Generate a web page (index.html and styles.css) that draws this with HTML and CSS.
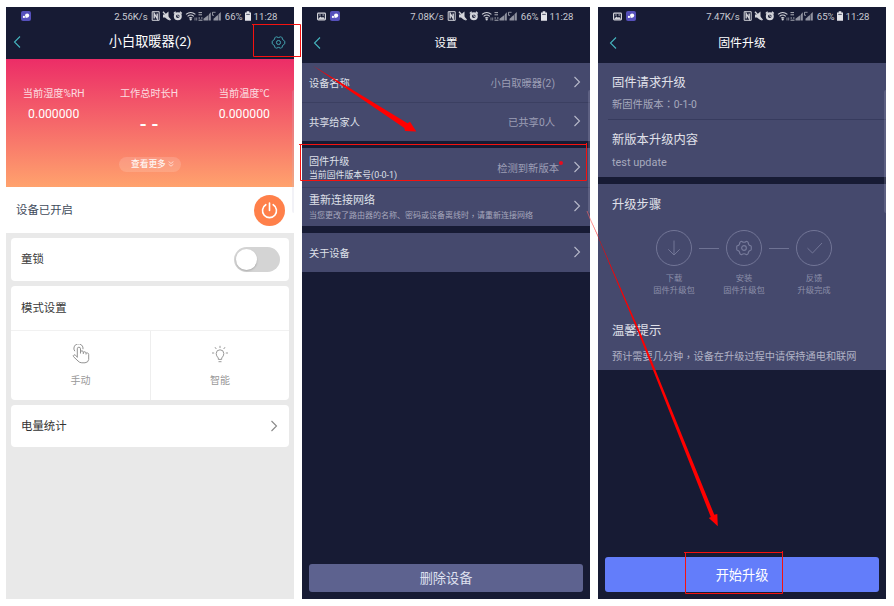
FILE: index.html
```html
<!DOCTYPE html>
<html lang="zh-CN">
<head>
<meta charset="utf-8">
<title>固件升级</title>
<link rel="stylesheet" href="styles.css">
</head>
<body>
<svg class="defs" width="0" height="0">
  <symbol id="back" viewBox="0 0 8 14"><path d="M7 1.5 1.5 7 7 12.5" fill="none" stroke="#45b5bf" stroke-width="1.1"/></symbol>
  <symbol id="chev" viewBox="0 0 8 12"><path d="M1.5 1 6.5 6 1.5 11" fill="none" stroke="currentColor" stroke-width="1.1"/></symbol>
  <symbol id="gear" viewBox="0 0 18 16"><path d="M5.4 1.2Q6 .7 6.7 1.1Q9 2.8 11.3 1.1Q12 .7 12.6 1.2L13.4 2.1Q13.5 5 16 5.7Q16.7 6 16.7 6.8V9.2Q16.7 10 16 10.3Q13.5 11 13.4 13.9L12.6 14.8Q12 15.3 11.3 14.9Q9 13.2 6.7 14.9Q6 15.3 5.4 14.8L4.6 13.9Q4.5 11 2 10.3Q1.3 10 1.3 9.2V6.8Q1.3 6 2 5.7Q4.5 5 4.6 2.1Z" fill="none" stroke="currentColor" stroke-width="1.2"/><circle cx="9" cy="8" r="2.5" fill="none" stroke="currentColor" stroke-width="1.2"/></symbol>
  <symbol id="photo" viewBox="0 0 9 9"><rect x=".6" y="1.1" width="7.8" height="6.8" rx=".8" fill="none" stroke="#d3d4da" stroke-width="1.2"/><path d="M1.5 6.5 3.5 4.6 5 5.7 6 4.8 7.6 6.5V7.2H1.5Z" fill="#d3d4da"/><path d="M2.2 3h1.6M5.4 3h1.6" stroke="#d3d4da"/></symbol>
  <symbol id="app" viewBox="0 0 10 10"><rect width="10" height="10" rx="2" fill="#5650bb"/><circle cx="6.1" cy="4.6" r="2.1" fill="#fff"/><circle cx="2.9" cy="5.9" r="1.1" fill="#fff"/><path d="M3 6.9 6 5.9V6.7Z" fill="#fff"/></symbol>
  <symbol id="status" viewBox="0 0 71 12">
    <g fill="none" stroke="#d3d4da">
      <path d="M8.2 1.7H1.2V10.3H8.2Z" stroke-width="1"/><path d="M3.2 8.5V3.5L6.2 8.5V3.5" stroke-width="1.4"/>
      <path d="M12 1.8 19.5 10" stroke-width="1.3"/>
      <circle cx="26.8" cy="6.2" r="2.9" stroke-width="2.2"/><path d="M26.8 4.2V6.4H28.3" stroke-width=".8"/><path d="M22.8 3.5 24.7 1.8M30.8 3.5 28.9 1.8" stroke-width="1.4"/>
      <path d="M35 4.4Q39.7.6 44.4 4.4M36.6 6.3Q39.7 3.7 42.8 6.3M38.1 8.1Q39.7 6.9 41.3 8.1" stroke-width="1.1"/>
      <path d="M44 7.5V10.5M45.7 7.5V10.5" stroke-width=".8" opacity=".7"/>
      <path d="M47.5 2.6H51M47.5 4.8H51M47.5 8H49M50 8H51.5M47.5 10.2H51.5" stroke-width="1" opacity=".8"/>
      <path d="M61.5 2.3H64.6M61.5 2.3V5.3M61.5 5.3H63" stroke-width=".9" opacity=".7"/>
    </g>
    <g fill="#d3d4da"><path d="M12 4.5H14L17.5 1.5V7.8L19 10.5 16.5 9.5 14 7.5H12Z"/><circle cx="39.7" cy="9.4" r="1.1"/><path d="M52.5 10.5V8.8L54.8 7V10.5ZM54.8 10.5V6.9L57.4 4.9V10.5ZM57.9 10.5V4.3L59.8 2.3V10.5ZM62.5 10.5V8.8L64.6 7V10.5ZM64.6 10.5V6.7L67 5V10.5ZM67.5 10.5V4.3L69.8 2V10.5Z" opacity=".65"/></g>
  </symbol>
  <symbol id="battery" viewBox="0 0 6 10"><path d="M0 1.5H1.7V.3H4.3V1.5H6V9.7H0Z" fill="#e4e4e9"/><path d="M1.2 3.4H4.8" stroke="#171b34" stroke-width=".7"/></symbol>
</svg>

<main class="board">
  <section class="phone">
    <header class="head head-home">
      <div class="status">
        <svg class="app"><use href="#app"/></svg>
        <span class="speed">2.56K/s</span><svg class="icons"><use href="#status"/></svg><span class="pct">66%</span><svg class="batt"><use href="#battery"/></svg><span class="time">11:28</span>
      </div>
      <div class="bar"><svg class="back"><use href="#back"/></svg><h1 class="title-home">小白取暖器(2)</h1><svg class="gear"><use href="#gear"/></svg></div>
    </header>
    <div class="hero">
      <div class="metrics">
        <div class="metric"><span>当前湿度%RH</span><b>0.000000</b></div>
        <div class="metric"><span>工作总时长H</span><b class="dash">- -</b></div>
        <div class="metric"><span>当前温度℃</span><b>0.000000</b></div>
      </div>
      <div class="more"><span>查看更多</span><svg width="6" height="6" viewBox="0 0 6 6"><path d="M.6.5 3 2.5 5.4.5M.6 3.2 3 5.2 5.4 3.2" fill="none" stroke="#fff" stroke-width=".6"/></svg></div>
    </div>
    <div class="power-row"><span>设备已开启</span>
      <svg width="31" height="31" viewBox="0 0 31 31"><circle cx="15.5" cy="15.5" r="15.5" fill="#ff804a"/><path d="M11.8 9.7A7 7 0 1 0 19.2 9.7M15.5 8V15.5" fill="none" stroke="#fff" stroke-width="1.6" stroke-linecap="round"/></svg>
    </div>
    <div class="cards">
      <div class="card lock"><span>童锁</span><i class="toggle"></i></div>
      <div class="card">
        <div class="mode-title">模式设置</div>
        <div class="modes">
          <div class="mode"><svg width="18" height="20" viewBox="0 0 18 20"><path d="M2.8 7.2A4.6 4.6 0 1 1 11 5.2M5.3 13.5V4.8A1.6 1.6 0 0 1 8.5 4.8V9.5M8.5 8.2Q8.6 6.7 9.9 6.8Q11.3 6.9 11.3 8.2V10M11.3 8.7Q11.6 7.5 12.9 7.8Q14 8.1 14 9.2V10.5M14 9.5Q14.5 8.6 15.6 9Q16.7 9.3 16.7 10.5V15.5Q16.3 18.5 13 18.8H9.8Q7.6 18.8 6 17L1.5 12.7Q.8 11.4 2 10.8Q3 10.5 5.3 13" fill="none" stroke="#939393" stroke-width="1"/></svg><span>手动</span></div>
          <div class="mode"><svg width="18" height="20" viewBox="0 0 18 20"><path d="M7.3 15.4V14Q5.2 12 5.2 9.6A3.8 3.8 0 0 1 12.8 9.6Q12.8 12 10.7 14V15.4ZM7.5 17.7H10.5M9 1.8V4M4 3.2 5.3 5M14 3.2 12.7 5M1 9H3.2M14.8 9H17" fill="none" stroke="#999" stroke-width="1"/></svg><span>智能</span></div>
        </div>
      </div>
      <div class="card stats"><span>电量统计</span><svg class="chev"><use href="#chev"/></svg></div>
    </div>
    <i class="edge"></i>
  </section>

  <section class="phone dark">
    <header class="head">
      <div class="status">
        <svg class="photo"><use href="#photo"/></svg><svg class="app"><use href="#app"/></svg>
        <span class="speed">7.08K/s</span><svg class="icons"><use href="#status"/></svg><span class="pct">66%</span><svg class="batt"><use href="#battery"/></svg><span class="time">11:28</span>
      </div>
      <div class="bar"><svg class="back inset"><use href="#back"/></svg><h1>设置</h1></div>
    </header>
    <div class="group">
      <div class="row"><span class="label">设备名称</span><span class="value">小白取暖器(2)</span><svg class="chev"><use href="#chev"/></svg></div>
      <div class="row"><span class="label">共享给家人</span><span class="value">已共享0人</span><svg class="chev"><use href="#chev"/></svg></div>
    </div>
    <div class="group">
      <div class="row"><div class="label firmware">固件升级<small>当前固件版本号(0-0-1)</small></div><span class="value alert">检测到新版本</span><svg class="chev"><use href="#chev"/></svg></div>
      <div class="row"><div class="label network">重新连接网络<small>当您更改了路由器的名称、密码或设备离线时<span class="mid low" lang="zh-TW">，</span>请重新连接网络</small></div><svg class="chev"><use href="#chev"/></svg></div>
    </div>
    <div class="group"><div class="row"><span class="label">关于设备</span><svg class="chev"><use href="#chev"/></svg></div></div>
    <button class="btn delete">删除设备</button>
    <i class="edge"></i>
  </section>

  <section class="phone dark">
    <header class="head">
      <div class="status">
        <svg class="photo"><use href="#photo"/></svg><svg class="app"><use href="#app"/></svg>
        <span class="speed">7.47K/s</span><svg class="icons"><use href="#status"/></svg><span class="pct">65%</span><svg class="batt"><use href="#battery"/></svg><span class="time">11:28</span>
      </div>
      <div class="bar"><svg class="back inset"><use href="#back"/></svg><h1 class="title-up">固件升级</h1></div>
    </header>
    <div class="group info">
      <div class="item"><h2>固件请求升级</h2><p>新固件版本<span class="mid" lang="zh-TW">：</span>0-1-0</p></div>
      <div class="item"><h2>新版本升级内容</h2><p class="latin">test update</p></div>
    </div>
    <div class="group guide">
      <h2>升级步骤</h2>
      <div class="steps">
        <div class="step"><svg width="36" height="36" viewBox="0 0 36 36"><circle cx="18" cy="18" r="17.5"/><path d="M18 10.5V25M12.3 19.3 18 25 23.7 19.3"/></svg><span>下载<br>固件升级包</span></div>
        <i class="link"></i>
        <div class="step"><svg width="36" height="36" viewBox="0 0 36 36"><circle cx="18" cy="18" r="17.5"/><use href="#gear" x="9.5" y="10" width="17" height="16"/></svg><span>安装<br>固件升级包</span></div>
        <i class="link"></i>
        <div class="step"><svg width="36" height="36" viewBox="0 0 36 36"><circle cx="18" cy="18" r="17.5"/><path d="M11.5 18.2 16.5 23 26 13"/></svg><span>反馈<br>升级完成</span></div>
      </div>
      <h2>温馨提示</h2>
      <p class="tip">预计需要几分钟<span class="mid low" lang="zh-TW">，</span>设备在升级过程中请保持通电和联网</p>
    </div>
    <button class="btn start">开始升级</button>
    <i class="edge"></i>
  </section>
</main>

<svg class="marks" width="894" height="606" viewBox="0 0 894 606">
  <g fill="none" stroke="#f5120f" stroke-width="1">
    <path d="M252 24.5H300.5V57M253.5 24.5V56.5H300.5"/>
    <path d="M299 144.5H587M300.5 144.5V180.5H586.5V143"/>
    <path d="M684 552.5H783M685.5 552.5V593.5H782.5V551"/>
  </g>
  <g fill="#f00">
    <path d="M313 65.8 407.5 123.3 410 121.7 416.3 131.5 405 130.9 404.3 128Z"/>
    <path d="M590 218 640 332 714.3 514.8 717.3 514 717.8 526.3 708.8 518 710.8 517 638.5 333Z"/>
  </g>
  <path d="M587 211 591 221 598 236" fill="none" stroke="#f66" stroke-width=".6"/>
</svg>
</body>
</html>
```
FILE: styles.css
```css
* { box-sizing: border-box; }
body {
  margin: 0;
  width: 894px;
  height: 606px;
  overflow: hidden;
  position: relative;
  background: #fff;
  font-family: Roboto, "Noto Sans CJK SC", sans-serif;
}
h1, h2, p { margin: 0; font-weight: 400; }
svg { display: block; flex: none; }
.defs { position: absolute; }
.board { display: flex; gap: 8px; padding: 7px 6px; }
.phone {
  position: relative;
  width: 288px;
  height: 592px;
  display: flex;
  flex-direction: column;
  background: #e9e9e9;
}
.dark { background: #171b34; }
.edge {
  position: absolute;
  right: 0;
  top: 83px;
  width: 2px;
  height: 123px;
  border-radius: 2px 0 0 2px;
  background: rgba(190, 190, 215, .2);
}

/* Header */
.head { height: 56px; flex: none; background: #171b34; color: #fff; }
.head-home { height: 52px; }
.status {
  display: flex;
  align-items: center;
  height: 18px;
  padding: 0 16.5px 0 15px;
  font-size: 9.6px;
  color: #c9cad2;
  white-space: nowrap;
}
.photo { width: 9px; height: 9px; margin-right: 4px; }
.app { width: 10px; height: 10px; }
.speed { margin-left: auto; }
.icons { width: 71px; height: 12px; margin: 0 3px 0 3px; }
.batt { width: 6px; height: 10px; margin: 0 2.5px; }
.bar {
  display: grid;
  grid-template-columns: 40px 1fr 40px;
  align-items: center;
  height: 36px;
}
.head-home .bar { height: 34.5px; }
.back { width: 8px; height: 14px; margin-left: 7px; }
.inset { margin-left: 11px; }
.bar h1 { font-size: 11.5px; line-height: 18px; text-align: center; }
.bar .title-home { font-size: 13.2px; }
.bar .title-up { font-size: 11.9px; }
.gear { width: 15px; height: 13px; margin-left: 16.5px; color: #45a9b5; }

/* Heater home */
.hero {
  height: 128px;
  flex: none;
  padding-top: 26.5px;
  color: #fff;
  background: linear-gradient(#ec2d67, #ffa26d);
}
.metrics {
  display: grid;
  grid-template-columns: repeat(3, 95.3px);
  justify-content: center;
  height: 71px;
  padding-right: 2px;
  text-align: center;
}
.metric { display: flex; flex-direction: column; font-size: 10.2px; line-height: 16px; }
.metric span { opacity: .8; white-space: nowrap; }
.metric b { margin-top: 4px; font-weight: 400; font-size: 12.2px; line-height: 16px; }
.metric .dash { font-size: 20px; margin-top: 14px; font-weight: 500; }
.more {
  display: flex;
  align-items: center;
  gap: 2px;
  width: 62px;
  height: 15px;
  margin: 0 auto;
  padding-left: 12px;
  border-radius: 8px;
  background: rgba(255, 255, 255, .15);
  font-size: 8.7px;
  line-height: 14px;
}
.more span { font-weight: 500; margin-top: -1px; opacity: .9; }
.power-row {
  display: flex;
  align-items: center;
  justify-content: space-between;
  height: 46px;
  flex: none;
  padding: 0 9px 0 10px;
  background: #fff;
  color: #414b5b;
  font-size: 11.4px;
}
.power-row span, .lock span, .stats span { margin-top: -1.5px; }
.cards {
  display: flex;
  flex-direction: column;
  gap: 5px;
  padding: 4.5px 5px;
  color: #3a3a3a;
  font-size: 11.4px;
}
.card { background: #fff; border-radius: 4px; }
.lock, .stats { display: flex; align-items: center; justify-content: space-between; padding: 0 9px 0 10px; }
.lock { height: 43px; }
.stats { height: 41.5px; padding-right: 11px; color: #333; }
.stats .chev { color: #888; }
.toggle {
  width: 46px;
  height: 25px;
  padding: 2px;
  border-radius: 13px;
  background: #d4d4d4;
}
.toggle::before {
  content: "";
  display: block;
  width: 21px;
  height: 21px;
  border-radius: 50%;
  background: #fff;
  box-shadow: 0 1px 2px rgba(0, 0, 0, .2);
}
.mode-title { height: 45.5px; padding-left: 10px; line-height: 45px; border-bottom: 1.5px solid #f1f1f1; }
.modes { display: grid; grid-template-columns: 1fr 1fr; height: 69px; }
.mode {
  display: flex;
  flex-direction: column;
  align-items: center;
  gap: 10px;
  padding-top: 13px;
  font-size: 10px;
  line-height: 14px;
  color: #999;
}
.mode + .mode { border-left: 1px solid #eee; }
.chev { width: 8px; height: 12px; }

/* Settings */
.group { background: #45496d; margin-bottom: 7px; flex: none; color: #dfe0e9; }
.row {
  display: flex;
  align-items: center;
  height: 39px;
  padding: 0 9px 1px 7px;
  font-size: 10.2px;
  white-space: nowrap;
}
.row + .row { border-top: 1px solid #3b3f61; padding-bottom: 2px; }
.label { margin-right: auto; }
.label small { display: block; }
.firmware { font-size: 10.1px; line-height: 14px; padding-top: 2px; }
.firmware small { font-size: 8.9px; line-height: 12px; }
.network { font-size: 11px; line-height: 16px; padding-top: 4px; }
.network small { font-size: 8px; line-height: 14px; color: #a5a7bc; }
.value { margin-right: 18px; color: #9c9eb5; font-size: 10.3px; }
.alert { position: relative; margin-right: 14px; margin-top: 1px; }
.alert::after {
  content: "";
  position: absolute;
  right: -3.5px;
  top: 1px;
  width: 4px;
  height: 4px;
  border-radius: 50%;
  background: #e80c1e;
}
.row .chev { color: #b8bacb; }
.mid { font-family: "Noto Sans CJK TC", sans-serif; line-height: 0; }
.low { vertical-align: -1px; }
.btn {
  margin: auto 7px 7px;
  height: 28px;
  padding: 1px 0 0;
  border: 0;
  border-radius: 3px;
  font: 13.2px/27px Roboto, "Noto Sans CJK SC", sans-serif;
}
.delete { background: #5d628f; color: #dfe1f0; }
.start { height: 35px; background: #637dfa; color: #fff; }

/* Firmware upgrade */
h2 { font-size: 12.3px; line-height: 18px; color: #e0e1ea; }
.item { height: 56px; padding: 11px 0 0 14px; }
.item + .item { height: 57.5px; margin-left: 10px; padding-left: 4px; border-top: 1px solid #373b5e; }
.item p { margin-top: 5px; font-size: 10.3px; line-height: 16px; color: #a7a9bd; }
.item .latin { font-size: 10.9px; margin-top: 6px; }
.guide { height: 186.5px; padding: 12.5px 0 0 14px; }
.steps { display: flex; justify-content: center; height: 108px; padding: 16px 10px 0 0; }
.step { width: 36px; display: flex; flex-direction: column; align-items: center; color: #777b9b; }
.step svg { fill: none; stroke: #777b9b; stroke-width: .9; }
.step span { margin-top: 7px; font-size: 8.3px; line-height: 11.5px; text-align: center; white-space: nowrap; color: #8c8fa9; }
.link { width: 20px; height: 1px; margin: 18px 7px 0; background: #6e7293; }
.tip { margin-top: 9px; font-size: 10.2px; line-height: 16px; color: #b0b2c5; white-space: nowrap; }

/* Annotations */
.marks { position: absolute; left: 0; top: 0; }
```
